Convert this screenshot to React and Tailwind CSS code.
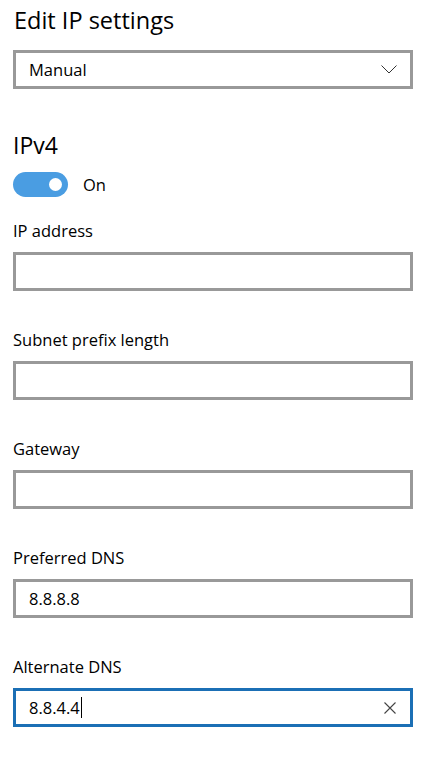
import React from "react";

const fields = [
  { label: "IP address", value: "" },
  { label: "Subnet prefix length", value: "" },
  { label: "Gateway", value: "" },
  { label: "Preferred DNS", value: "8.8.8.8" },
  { label: "Alternate DNS", value: "8.8.4.4", focused: true },
];

const Chevron = () => (
  <svg width="16" height="9" viewBox="0 0 16 9" fill="none">
    <path d="M0.5 0.5 L8 8 L15.5 0.5" stroke="#333" strokeWidth="1" />
  </svg>
);

const ClearIcon = () => (
  <svg width="12" height="12" viewBox="0 0 12 12" fill="none">
    <path d="M0.5 0.5 L11.5 11.5 M11.5 0.5 L0.5 11.5" stroke="#444" strokeWidth="1.1" />
  </svg>
);

const Field = ({ label, value, focused }) => (
  <div className="flex flex-col">
    <div className="text-[16.5px] leading-[20px] text-black">{label}</div>
    <div
      className={
        focused
          ? "mt-[11px] h-[39px] border-[3px] border-[#1b6fb5] flex items-center pl-[13px] pr-[10px]"
          : "mt-[11px] h-[39px] border-[3px] border-[#999999] flex items-center pl-[13px] pr-[10px]"
      }
    >
      <span className="text-[16.5px] text-black leading-[20px]">{value}</span>
      {focused && <span className="w-px h-[21px] bg-black ml-[1px]"></span>}
      {focused && (
        <span className="ml-auto mr-[4px] flex items-center">
          <ClearIcon />
        </span>
      )}
    </div>
  </div>
);

export default function App() {
  return (
    <div
      className="bg-white min-h-[772px] w-full pl-[13px] pr-[14px] pt-[6px] flex flex-col"
      style={{ fontFamily: "'Open Sans', 'Noto Sans', sans-serif" }}
    >
      <h1 className="text-[23.5px] leading-[28px] text-black font-normal pl-px">
        Edit IP settings
      </h1>

      <div className="mt-[16px] h-[39px] border-[3px] border-[#999999] flex items-center pl-[13px] pr-[13px]">
        <span className="text-[16.5px] leading-[20px] text-black">Manual</span>
        <span className="ml-auto flex items-center">
          <Chevron />
        </span>
      </div>

      <h2 className="mt-[42px] text-[23px] leading-[28px] text-black font-normal">
        IPv4
      </h2>

      <div className="mt-[13px] flex items-center">
        <div className="w-[55px] h-[25px] rounded-full bg-[#4a9de2] flex items-center justify-end pr-[6px]">
          <div className="w-[13px] h-[13px] rounded-full bg-white"></div>
        </div>
        <span className="ml-[15px] text-[16.5px] leading-[20px] text-black">On</span>
      </div>

      <div className="mt-[24px] flex flex-col gap-[39px]">
        {fields.map((f) => (
          <Field key={f.label} {...f} />
        ))}
      </div>
    </div>
  );
}
